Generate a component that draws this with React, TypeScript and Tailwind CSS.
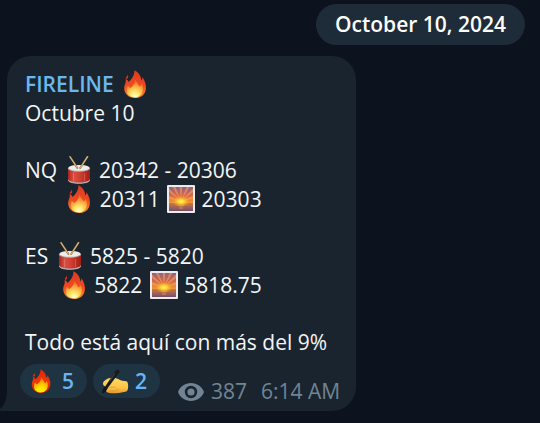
import React from "react";

const INLINE = "ml-0.5 mr-px inline-block h-7 w-7 align-[-6px]";

function Fire({ className = INLINE, vivid = false }: { className?: string; vivid?: boolean }) {
  const id = vivid ? "vivid" : "soft";
  return (
    <svg viewBox="0 0 28 28" className={className} role="img" aria-label="fire">
      <defs>
        <linearGradient id={`${id}-outer`} x1="0" y1="0" x2="0" y2="1">
          <stop offset="0" stopColor={vivid ? "#e32208" : "#dc3a22"} />
          <stop offset="0.55" stopColor={vivid ? "#ee3a06" : "#ee4a22"} />
          <stop offset="1" stopColor={vivid ? "#c81808" : "#f8902c"} />
        </linearGradient>
        <radialGradient id={`${id}-inner`} cx="0.5" cy="0.95" r="0.85">
          <stop offset="0" stopColor={vivid ? "#fff200" : "#fffde0"} />
          <stop offset="0.3" stopColor={vivid ? "#ffe600" : "#ffec70"} />
          <stop offset="0.65" stopColor={vivid ? "#ffc000" : "#fdb040"} />
          <stop offset="1" stopColor={vivid ? "#ff7a00" : "#f4681f"} />
        </radialGradient>
      </defs>
      <path
        d="M13.4 0.2C17.4 2.2 20 5.6 20.4 10.4C21.2 9.4 21.6 8.4 21.4 7C23.8 10.4 25.2 14.4 24.9 18.4C24.5 24.2 20.4 27.9 14.2 28C7.8 28 3.5 24.2 3.2 18.6C3.1 15.6 4.4 13.6 4.8 11.4C4.9 10.4 4.7 9.6 4.4 9C6.2 9.6 7.2 10.6 7.6 12C10.6 9 13.6 5.6 13.4 0.2Z"
        fill={`url(#${id}-outer)`}
      />
      <path d="M4.6 7.4C5.8 6.8 6.6 5.8 6.4 4.4C7.8 6 7.4 8 5.6 9.2Z" fill="#d9331a" />
      <path
        d="M14.4 9.4C15.4 12 17.2 13.6 18.4 16.4C19.6 15.8 20.4 15 20.8 13.6C22.2 17 22.6 21 20.6 24C18.9 26.4 16.6 27.4 14 27.4C9.8 27.4 6.4 25.4 5.9 21.6C5.6 19.6 6.2 17.6 6.8 15.8C7.8 16.6 8.5 17.2 9 18.2C12.2 15.8 14.4 13 14.4 9.4Z"
        fill={`url(#${id}-inner)`}
      />
    </svg>
  );
}

function Drum() {
  return (
    <svg viewBox="0 0 28 28" className={INLINE} role="img" aria-label="drum">
      <defs>
        <linearGradient id="drum-body" x1="0" y1="0" x2="1" y2="0">
          <stop offset="0" stopColor="#a8231c" />
          <stop offset="0.25" stopColor="#dc5044" />
          <stop offset="0.6" stopColor="#cc3a2e" />
          <stop offset="1" stopColor="#a01c16" />
        </linearGradient>
      </defs>
      <path d="M3 12V23.5C3 28.8 25 28.8 25 23.5V12Z" fill="url(#drum-body)" />
      <path d="M3 23C4 27.6 24 27.6 25 23V24.2C24 29 4 29 3 24.2Z" fill="#b9b0ae" />
      <ellipse cx="14" cy="12.4" rx="11.2" ry="3.5" fill="#aaa5a3" />
      <ellipse cx="14" cy="11.9" rx="10.5" ry="2.9" fill="#efebe6" />
      <path d="M8.5 17.5V25.5M19.5 17.5V25.5" stroke="#e8aaa0" strokeWidth="0.8" opacity="0.4" />
      <path d="M5 0.8L12.4 12M22.6 0.6L15.2 12" stroke="#8a6a38" strokeWidth="1.8" strokeLinecap="round" />
      <path d="M5 0.8L12.4 12M22.6 0.6L15.2 12" stroke="#d8b880" strokeWidth="1.1" strokeLinecap="round" />
    </svg>
  );
}

function Sunrise() {
  return (
    <svg viewBox="0 0 28 28" className={INLINE} role="img" aria-label="sunrise">
      <defs>
        <linearGradient id="sky" x1="0" y1="0" x2="0" y2="1">
          <stop offset="0" stopColor="#8f6284" />
          <stop offset="0.35" stopColor="#d8684a" />
          <stop offset="0.65" stopColor="#f2942e" />
        </linearGradient>
        <linearGradient id="sea" x1="0" y1="0" x2="0" y2="1">
          <stop offset="0" stopColor="#cc7844" />
          <stop offset="1" stopColor="#74506c" />
        </linearGradient>
        <radialGradient id="sun" cx="0.5" cy="0.5" r="0.5">
          <stop offset="0" stopColor="#fff76a" />
          <stop offset="0.35" stopColor="#ffd633" />
          <stop offset="1" stopColor="#ff9d22" stopOpacity="0" />
        </radialGradient>
      </defs>
      <rect x="0" y="0" width="28" height="28" rx="1" fill="#eeebee" />
      <rect x="2" y="2" width="24" height="24" fill="url(#sky)" />
      <path
        d="M14 16L2 14V11ZM14 16L2 7V3.5ZM14 16L5.5 2H8.5ZM14 16L12.7 2H15.3ZM14 16L19.5 2H22.5ZM14 16L26 3.5V7ZM14 16L26 11V14Z"
        fill="#f8ac58"
        opacity="0.55"
      />
      <rect x="2" y="18" width="24" height="8" fill="url(#sea)" />
      <path d="M11 20.5H17M12 23H16" stroke="#f0953b" strokeWidth="1.4" opacity="0.6" />
      <ellipse cx="14" cy="16.5" rx="9" ry="5.5" fill="url(#sun)" />
    </svg>
  );
}

function WritingHand() {
  return (
    <svg viewBox="0 0 27 25" className="h-[25px] w-[27px]" role="img" aria-label="writing hand">
      <defs>
        <linearGradient id="skin" x1="0" y1="0" x2="0" y2="1">
          <stop offset="0" stopColor="#ffd95e" />
          <stop offset="0.65" stopColor="#fcc546" />
          <stop offset="1" stopColor="#e7982f" />
        </linearGradient>
      </defs>
      <path
        d="M1 14.6C1 12.6 3.8 10.6 6 9.6C9 8.2 14 8.6 17 10.4C19 11.6 21.6 11.8 24.4 12.2C26.8 12.8 26.8 21.8 24.4 22.4C21.4 22.8 18 24.2 14 24.2C10.6 24.2 7 24.4 5.2 23.2C3.8 22.4 3.6 20.8 4.4 19.8C3 19.4 2.8 18.4 3.2 17.4C2 17.2 1 16.2 1 14.6Z"
        fill="url(#skin)"
      />
      <path
        d="M8 18.6C10 17.6 12 17.8 13.6 18.6M16.4 20C14.4 22.2 10.6 22.4 7.8 22"
        fill="none"
        stroke="#d8923a"
        strokeWidth="0.8"
        strokeLinecap="round"
      />
      <path d="M14 1.2C15.4 -0.2 18.2 1 17.4 3.2L5.6 19.2L3.2 17.6Z" fill="#191b1d" />
      <path d="M3.2 17.2L5.8 19L3.6 22.8L0.2 24.8L0.8 20.6Z" fill="#111315" />
      <path d="M12.8 4.4L8 11.8" stroke="#555b60" strokeWidth="0.7" />
    </svg>
  );
}

function Eye() {
  return (
    <svg viewBox="0 0 26 18" className="mr-[7px] h-[18px] w-[26px]" role="img" aria-label="views">
      <path
        fillRule="evenodd"
        fill="#718494"
        d="M13 0C19 0 24 3.6 26 9C24 14.4 19 18 13 18S2 14.4 0 9C2 3.6 7 0 13 0ZM13 2.8A6.2 6.2 0 1 0 13 15.2A6.2 6.2 0 1 0 13 2.8ZM13 5.4A3.6 3.6 0 1 1 13 12.6A3.6 3.6 0 1 1 13 5.4Z"
      />
    </svg>
  );
}

function Reaction({ children, count }: { children: React.ReactNode; count: number }) {
  return (
    <button
      type="button"
      className="flex h-[34px] w-[67px] items-center justify-between rounded-full bg-[#1f3442] pr-[13px] pl-[9px] font-semibold text-[#6ab4f2]"
    >
      {children}
      <span>{count}</span>
    </button>
  );
}

export default function App() {
  return (
    <main className="flex min-h-screen flex-col bg-[#0d131e] pt-1 pb-3 font-['Open_Sans','Noto_Sans',sans-serif] text-[21px] leading-[29px] text-[#f3f5f6]">
      <time
        dateTime="2024-10-10"
        className="mr-[15px] self-end rounded-full bg-[#1e2b38] px-[19px] py-1.5 font-semibold text-white"
      >
        October 10, 2024
      </time>

      <article className="relative mt-[11px] ml-[7px] w-fit rounded-3xl rounded-bl-none bg-[#1a242f] pt-3.5 pr-4 pb-[5px] pl-[13px]">
        <svg viewBox="0 0 7 20" className="absolute bottom-0 -left-[7px] h-5 w-[7px]" aria-hidden="true">
          <path d="M7 0C7 9 4 15 0 18V20H7Z" fill="#1a242f" />
        </svg>

        <div className="flex flex-col gap-7 pl-[5px] whitespace-pre">
          <div>
            <h1 className="h-[29px] font-semibold text-[#6ab8ee]">
              FIRELINE <Fire />
            </h1>
            <p className="h-[29px]">Octubre 10</p>
          </div>
          <div>
            <p className="h-[29px]">
              NQ <Drum /> 20342 - 20306
            </p>
            <p className="h-[29px]">
              {"       "}
              <Fire /> 20311 <Sunrise /> 20303
            </p>
          </div>
          <div>
            <p className="h-[29px]">
              ES <Drum /> 5825 - 5820
            </p>
            <p className="h-[29px]">
              {"      "}
              <Fire /> 5822 <Sunrise /> 5818.75
            </p>
          </div>
          <p className="h-[29px]">Todo está aquí con más del 9%</p>
        </div>

        <footer className="mt-[7px] flex items-start gap-1.5">
          <Reaction count={5}>
            <Fire vivid className="h-6 w-6" />
          </Reaction>
          <Reaction count={2}>
            <WritingHand />
          </Reaction>
          <div className="mt-[13px] ml-auto flex items-center pl-3 text-[#718494]">
            <Eye />
            <span>387</span>
            <time dateTime="06:14" className="ml-3.5">
              6:14 AM
            </time>
          </div>
        </footer>
      </article>
    </main>
  );
}
